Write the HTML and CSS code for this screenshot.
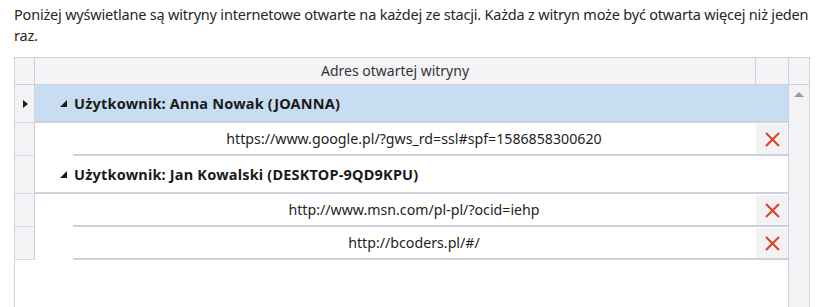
FILE: index.html
```html
<!DOCTYPE html>
<html lang="pl">
<head>
  <meta charset="UTF-8">
  <title>Otwarte witryny</title>
  <link rel="stylesheet" href="styles.css">
</head>
<body>
  <p class="intro">Poniżej wyświetlane są witryny internetowe otwarte na każdej ze stacji. Każda z witryn może być otwarta więcej niż jeden raz.</p>

  <div class="grid">
    <div class="grid-head">
      <div class="rh"></div>
      <div class="col-addr">Adres otwartej witryny</div>
      <div class="col-act"></div>
      <div class="col-scroll"></div>
    </div>

    <div class="grid-body">
      <div class="rows">
        <div class="row group selected">
          <div class="rh"><span class="current"></span></div>
          <div class="group-cell">
            <svg class="expander" width="7" height="7" viewBox="0 0 7 7"><polygon points="7,0 7,7 0,7" fill="#1a1a1a"/></svg>
            Użytkownik: Anna Nowak (JOANNA)
          </div>
        </div>
        <div class="row item">
          <div class="rh"></div>
          <div class="indent"></div>
          <div class="url-cell">https://www.google.pl/?gws_rd=ssl#spf=1586858300620</div>
          <div class="act-cell">
            <button class="remove"><svg width="15" height="15" viewBox="0 0 15 15"><path d="M1 1 L14 14 M14 1 L1 14" stroke="#d9472b" stroke-width="2.2"/></svg></button>
          </div>
        </div>

        <div class="row group">
          <div class="rh"></div>
          <div class="group-cell">
            <svg class="expander" width="7" height="7" viewBox="0 0 7 7"><polygon points="7,0 7,7 0,7" fill="#1a1a1a"/></svg>
            Użytkownik: Jan Kowalski (DESKTOP-9QD9KPU)
          </div>
        </div>
        <div class="row item">
          <div class="rh"></div>
          <div class="indent"></div>
          <div class="url-cell">http://www.msn.com/pl-pl/?ocid=iehp</div>
          <div class="act-cell">
            <button class="remove"><svg width="15" height="15" viewBox="0 0 15 15"><path d="M1 1 L14 14 M14 1 L1 14" stroke="#d9472b" stroke-width="2.2"/></svg></button>
          </div>
        </div>
        <div class="row item">
          <div class="rh"></div>
          <div class="indent"></div>
          <div class="url-cell">http://bcoders.pl/#/</div>
          <div class="act-cell">
            <button class="remove"><svg width="15" height="15" viewBox="0 0 15 15"><path d="M1 1 L14 14 M14 1 L1 14" stroke="#d9472b" stroke-width="2.2"/></svg></button>
          </div>
        </div>
      </div>

      <div class="scrollbar">
        <span class="scroll-up"></span>
      </div>
    </div>
  </div>
</body>
</html>
```

FILE: styles.css
```css
body {
  margin: 0;
  padding: 4px 14px 0 14px;
  background: #ffffff;
  color: #1e1e1e;
  font-family: "Noto Sans", "Open Sans", sans-serif;
  font-size: 15px;
  overflow: hidden;
}

.intro {
  margin: 0;
  line-height: 21px;
  width: 805px;
  font-size: 14.5px;
  letter-spacing: -0.2px;
  color: #262626;
}

.grid {
  margin-top: 11px;
  width: 794px;
  height: 260px;
  border: 1px solid #cfd0de;
  display: flex;
  flex-direction: column;
}

.grid-head {
  display: flex;
  height: 26px;
  background: #f4f4f7;
  border-bottom: 1px solid #cfd0de;
}

.grid-head .rh {
  width: 19px;
  border-right: 1px solid #cfd0de;
}

.col-addr {
  flex: 1;
  text-align: center;
  line-height: 26px;
  font-size: 14px;
  color: #333333;
}

.col-act {
  width: 32px;
  border-left: 1px solid #cfd0de;
}

.col-scroll {
  width: 20px;
  border-left: 1px solid #cfd0de;
}

.grid-body {
  flex: 1;
  display: flex;
}

.rows {
  flex: 1;
  display: flex;
  flex-direction: column;
}

.row {
  display: flex;
}

.row .rh {
  width: 19px;
  background: #f3f3f6;
  border-right: 1px solid #cfd0de;
  border-bottom: 1px solid #d6d7e3;
  display: flex;
  align-items: center;
  justify-content: center;
}

.current {
  width: 0;
  height: 0;
  margin-left: 2px;
  border-top: 4px solid transparent;
  border-bottom: 4px solid transparent;
  border-left: 5px solid #1a1a1a;
}

.group {
  height: 38px;
}

.group .rh {
  height: 37px;
}

.group-cell {
  flex: 1;
  display: flex;
  align-items: center;
  padding-left: 25px;
  font-weight: bold;
  font-size: 14.5px;
  letter-spacing: 0.2px;
  color: #1a1a1a;
  border-bottom: 2px solid #cfd0de;
}

.expander {
  margin-right: 7px;
  margin-top: 1px;
}

.group.selected .group-cell {
  background: #c8ddf2;
}

.item {
  height: 33px;
}

.item .rh {
  height: 32px;
}

.indent {
  width: 38px;
  background: #ffffff;
}

.url-cell {
  flex: 1;
  text-align: center;
  line-height: 31px;
  font-size: 14.2px;
  color: #1e1e1e;
  border-bottom: 2px solid #cfd0de;
}

.act-cell {
  width: 33px;
  border-bottom: 2px solid #cfd0de;
  display: flex;
}

.remove {
  flex: 1;
  margin: 1px 0 0 1px;
  padding: 0;
  border: none;
  background: #f2f2f5;
  display: flex;
  align-items: center;
  justify-content: center;
}

.scrollbar {
  width: 20px;
  background: #f3f3f6;
  border-left: 1px solid #cfd0de;
  display: flex;
  justify-content: center;
}

.scroll-up {
  margin-top: 7px;
  width: 0;
  height: 0;
  border-left: 5px solid transparent;
  border-right: 5px solid transparent;
  border-bottom: 5px solid #9a9aa2;
}
```
